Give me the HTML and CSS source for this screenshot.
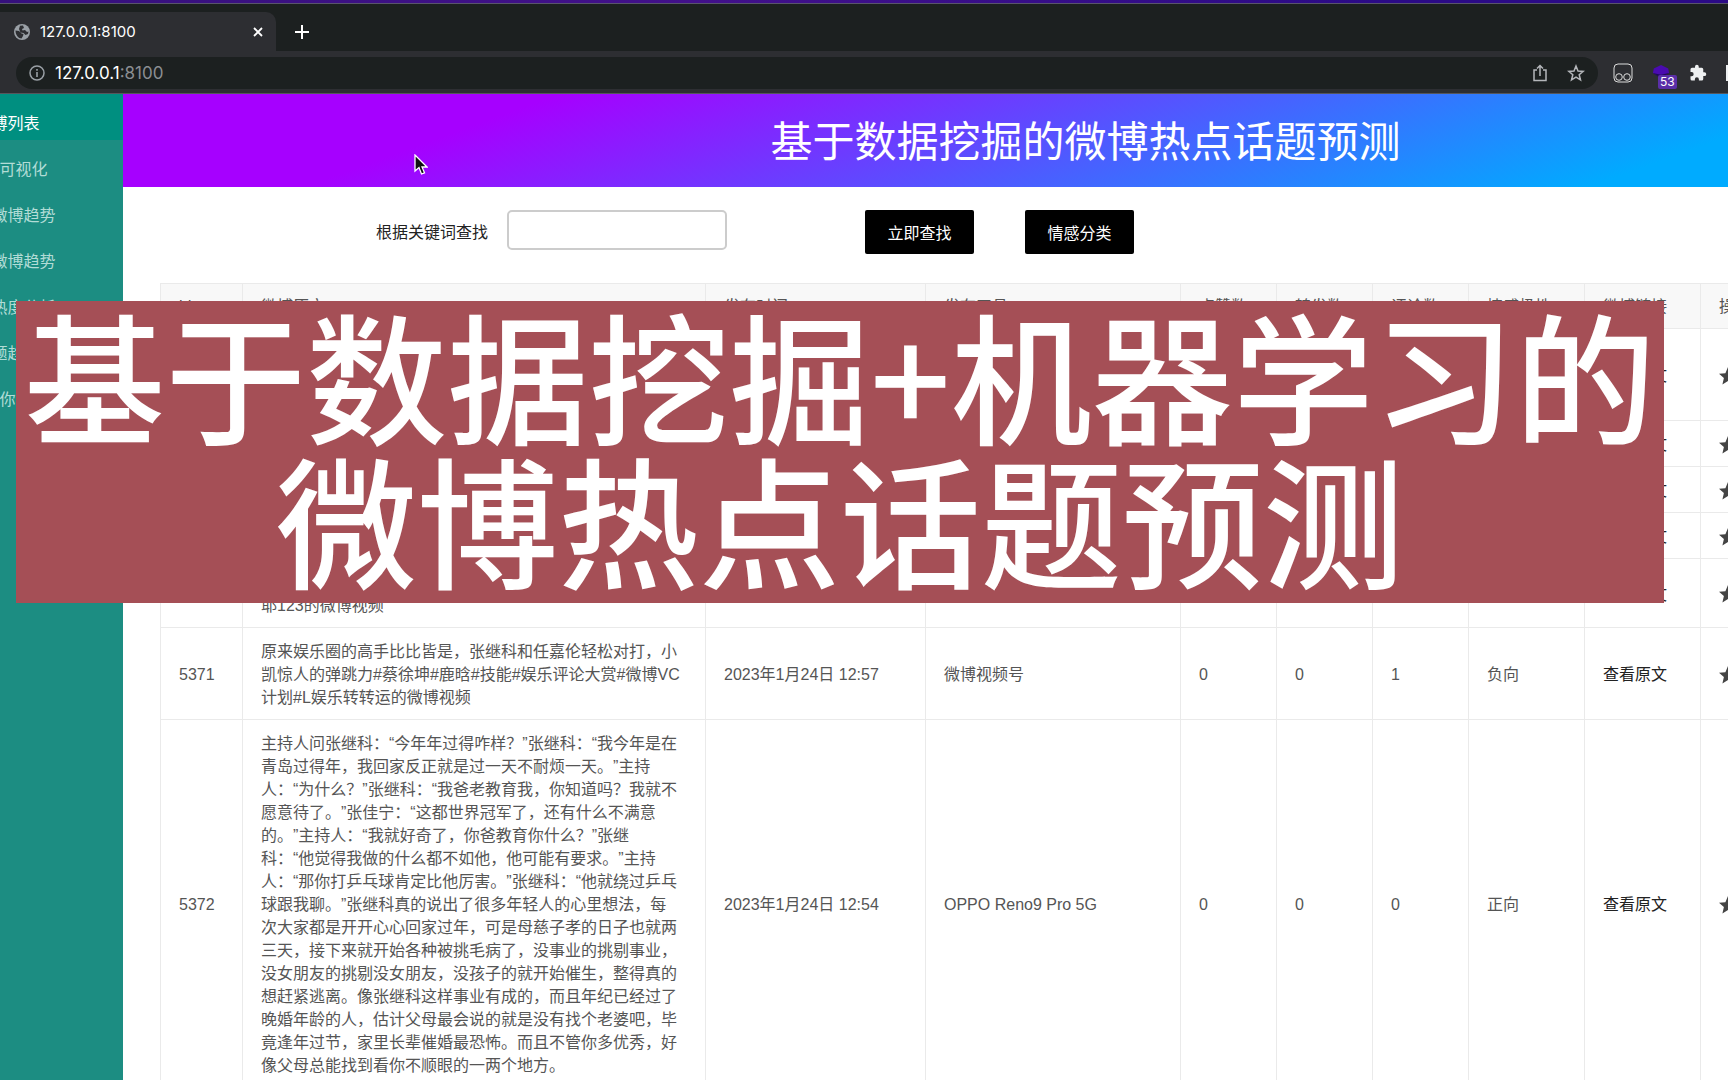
FILE: index.html
```html
<!DOCTYPE html>
<html lang="zh-CN">
<head>
<meta charset="utf-8">
<title>127.0.0.1:8100</title>
<link rel="stylesheet" href="styles.css">
</head>
<body>
<div class="desktop-edge"></div>
<header class="browser">
  <div class="tabs">
    <div class="tab">
      <svg class="globe" viewBox="0 0 16 16"><circle cx="8" cy="8" r="8" fill="#9aa0a6"/><path d="M1.500 6.500L5 7l2.500 2.500 2 .5L9 12l-1.500 2.500C4.500 14.500 1.500 11 1.500 6.500zM6 1.800l3-.3 1 2.500-2 1 .5 1.500 2.500-.5 2 2 1.500-.5-.5 2.500-2.500 1-2-2-3-.5L5 5z" fill="#2d2e32"/></svg>
      <span>127.0.0.1:8100</span>
      <button class="icon-button" aria-label="关闭标签页"><svg width="10" height="10" viewBox="0 0 10 10"><path d="M1 1l8 8M9 1L1 9" stroke="#fff" stroke-width="1.800"/></svg></button>
    </div>
    <button class="icon-button" aria-label="新标签页"><svg width="14" height="14" viewBox="0 0 14 14"><path d="M7 0v14M0 7h14" stroke="#fff" stroke-width="2"/></svg></button>
  </div>
  <div class="toolbar">
    <div class="address">
      <svg width="16" height="16" viewBox="0 0 16 16"><circle cx="8" cy="8" r="7" fill="none" stroke="#9aa0a6" stroke-width="1.500"/><path d="M8 7v5M8 4v1.700" stroke="#9aa0a6" stroke-width="1.600"/></svg>
      <a class="url" href="#">127.0.0.1<span>:8100</span></a>
      <svg width="14" height="18" viewBox="0 0 14 18" fill="none" stroke="#b4b6ba" stroke-width="1.500"><path d="M4 6H1v10.500h12V6h-3M7 12V2M4 4.500l3-3 3 3"/></svg>
      <svg class="bookmark" width="18" height="18" viewBox="0 0 18 18"><path d="M9 2l2 5 5.200.4-4 3.400 1.300 5.200L9 13.200 4.500 16l1.300-5.200-4-3.400L7 7z" fill="none" stroke="#b4b6ba" stroke-width="1.500"/></svg>
    </div>
    <div class="extensions">
      <svg width="20" height="20" viewBox="0 0 20 20" fill="none" stroke="#dcdcdc"><rect x="1" y="1" width="18" height="18" rx="4"/><circle cx="6" cy="14" r="3.300"/><circle cx="14" cy="14" r="3.300"/></svg>
      <div class="extension"><svg width="18" height="18" viewBox="0 0 20 18"><path d="M10 0l8 4 1 5-9 5-9-5 1-5z" fill="#4a0bb0"/><path d="M1 9l9 2 9-2-9 6z" fill="#210c58"/></svg><span class="badge">53</span></div>
      <svg width="18" height="18" viewBox="0 0 24 24"><path d="M20.500 11H19V7a2 2 0 0 0-2-2h-4V3.500a2.500 2.500 0 0 0-5 0V5H4a2 2 0 0 0-2 2v3.800h1.500a2.700 2.700 0 0 1 0 5.400H2V20a2 2 0 0 0 2 2h3.800v-1.500a2.700 2.700 0 0 1 5.400 0V22H17a2 2 0 0 0 2-2v-4h1.500a2.500 2.500 0 0 0 0-5z" fill="#eef0f2"/></svg>
      <div class="side-panel"></div>
    </div>
  </div>
</header>
<div class="page">
  <nav class="sidebar">
    <a class="active" href="#">微博列表</a>
    <a href="#">数据可视化</a>
    <a href="#">热门微博趋势</a>
    <a href="#">最新微博趋势</a>
    <a href="#">微博热度分析</a>
    <a href="#">热话题趋势图</a>
    <a href="#">预测你始终</a>
  </nav>
  <main>
    <h1>基于数据挖掘的微博热点话题预测</h1>
    <form class="search">
      <label for="keyword">根据关键词查找</label>
      <input id="keyword" type="text">
      <button type="button" class="find">立即查找</button>
      <button type="button">情感分类</button>
    </form>
    <table>
      <colgroup><col class="c-id"><col class="c-text"><col class="c-time"><col class="c-tool"><col class="c-num"><col class="c-num"><col class="c-num"><col class="c-link"><col class="c-link"><col></colgroup>
      <thead><tr><th>id</th><th>微博原文</th><th>发布时间</th><th>发布工具</th><th>点赞数</th><th>转发数</th><th>评论数</th><th>情感极性</th><th>微博链接</th><th>操作</th></tr></thead>
      <tbody>
        <tr class="three-lines"><td></td><td></td><td></td><td></td><td></td><td></td><td></td><td></td><td><a href="#">查看原文</a></td><td><svg class="star" viewBox="0 0 18 18"><use href="#star"/></svg></td></tr>
        <tr><td></td><td></td><td></td><td></td><td></td><td></td><td></td><td></td><td><a href="#">查看原文</a></td><td><svg class="star" viewBox="0 0 18 18"><use href="#star"/></svg></td></tr>
        <tr><td></td><td></td><td></td><td></td><td></td><td></td><td></td><td></td><td><a href="#">查看原文</a></td><td><svg class="star" viewBox="0 0 18 18"><use href="#star"/></svg></td></tr>
        <tr><td></td><td></td><td></td><td></td><td></td><td></td><td></td><td></td><td><a href="#">查看原文</a></td><td><svg class="star" viewBox="0 0 18 18"><use href="#star"/></svg></td></tr>
        <tr><td></td><td><br>耶123的微博视频</td><td></td><td></td><td></td><td></td><td></td><td></td><td><a href="#">查看原文</a></td><td><svg class="star" viewBox="0 0 18 18"><use href="#star"/></svg></td></tr>
        <tr><td>5371</td><td>原来娱乐圈的高手比比皆是，张继科和任嘉伦轻松对打，小<br>凯惊人的弹跳力#蔡徐坤#鹿晗#技能#娱乐评论大赏#微博VC<br>计划#L娱乐转转运的微博视频</td><td>2023年1月24日 12:57</td><td>微博视频号</td><td>0</td><td>0</td><td>1</td><td>负向</td><td><a href="#">查看原文</a></td><td><svg class="star" viewBox="0 0 18 18"><use href="#star"/></svg></td></tr>
        <tr><td>5372</td><td>主持人问张继科：“今年年过得咋样？”张继科：“我今年是在<br>青岛过得年，我回家反正就是过一天不耐烦一天。”主持<br>人：“为什么？”张继科：“我爸老教育我，你知道吗？我就不<br>愿意待了。”张佳宁：“这都世界冠军了，还有什么不满意<br>的。”主持人：“我就好奇了，你爸教育你什么？”张继<br>科：“他觉得我做的什么都不如他，他可能有要求。”主持<br>人：“那你打乒乓球肯定比他厉害。”张继科：“他就绕过乒乓<br>球跟我聊。”张继科真的说出了很多年轻人的心里想法，每<br>次大家都是开开心心回家过年，可是母慈子孝的日子也就两<br>三天，接下来就开始各种被挑毛病了，没事业的挑剔事业，<br>没女朋友的挑剔没女朋友，没孩子的就开始催生，整得真的<br>想赶紧逃离。像张继科这样事业有成的，而且年纪已经过了<br>晚婚年龄的人，估计父母最会说的就是没有找个老婆吧，毕<br>竟逢年过节，家里长辈催婚最恐怖。而且不管你多优秀，好<br>像父母总能找到看你不顺眼的一两个地方。</td><td>2023年1月24日 12:54</td><td>OPPO Reno9 Pro 5G</td><td>0</td><td>0</td><td>0</td><td>正向</td><td><a href="#">查看原文</a></td><td><svg class="star" viewBox="0 0 18 18"><path id="star" d="M9 0l2.600 6.200 6.400.5-4.900 4.200 1.500 6.600L9 14l-5.600 3.500 1.500-6.600L0 6.700l6.400-.5z" fill="#444"/></svg></td></tr>
      </tbody>
    </table>
  </main>
</div>
<div class="caption">基于数据挖掘+机器学习的<br>微博热点话题预测</div>
<svg class="cursor" viewBox="0 0 14 21"><path d="M1 1v16l4-3.500L7.500 20l3-1.200L8 13h5z" fill="#111" stroke="#fff" stroke-width="1.300"/></svg>
</body>
</html>
```
FILE: styles.css
```css
* { box-sizing: border-box; }
body {
  margin: 0;
  height: 100vh;
  overflow: hidden;
  position: relative;
  display: flex;
  flex-direction: column;
  background: #fff;
  color: #222;
  font: 16px/23px "Liberation Sans", "Noto Sans CJK SC", sans-serif;
  text-spacing-trim: space-all;
}
button { font: inherit; border: 0; padding: 0; }
.desktop-edge {
  height: 4px;
  flex: none;
  border-bottom: 1px solid #59546c;
  background: linear-gradient(90deg, #36107c, #42108a 40%, #2b0a86 80%);
}
.browser {
  flex: none;
  background: #2d2e32;
  color: #fff;
  font-family: Inter, sans-serif;
  border-bottom: 1px solid #55565c;
}
.tabs {
  height: 47px;
  display: flex;
  align-items: flex-end;
  gap: 19px;
  background: #1c2020;
}
.tab {
  width: 276px;
  height: 39px;
  padding: 0 13px 0 14px;
  display: flex;
  align-items: center;
  gap: 10px;
  background: #2d2e32;
  border-radius: 0 10px 0 0;
  font-size: 15px;
}
.tab span { flex: 1; }
.globe { width: 16px; height: 16px; }
.icon-button {
  display: flex;
  background: none;
}
.tabs > .icon-button { padding-bottom: 12px; }
.toolbar {
  height: 42px;
  display: flex;
  align-items: center;
  padding: 2px 0 0 16px;
  gap: 15px;
}
.address {
  flex: 1;
  height: 32px;
  padding: 0 13px;
  display: flex;
  align-items: center;
  gap: 10px;
  border-radius: 16px;
  background: #1c2020;
}
.url {
  flex: 1;
  color: #fff;
  font-size: 17px;
  text-decoration: none;
}
.url span { color: #8b8e92; }
.bookmark { margin-left: 10px; }
.extensions {
  display: flex;
  align-items: center;
  gap: 19px;
}
.extension {
  position: relative;
  display: flex;
}
.badge {
  position: absolute;
  left: 6px;
  top: 11px;
  padding: 0 2px;
  border-radius: 2px;
  background: #5a2fa8;
  font-size: 12px;
  line-height: 14px;
}
.side-panel {
  width: 2px;
  height: 16px;
  background: #eef0f2;
}
/* The web page is wider than the window and is scrolled sideways */
.page {
  flex: 1;
  width: calc(100% + 428px);
  margin-left: -108px;
  display: flex;
}
.sidebar {
  width: 231px;
  background: #1c8d82;
  text-align: center;
}
.sidebar a {
  display: block;
  padding: 18px 0 5px;
  color: #b2dcd6;
  text-decoration: none;
}
.sidebar .active {
  background: #008f80;
  color: #fff;
}
main { flex: 1; }
h1 {
  margin: 0;
  height: 93px;
  padding-top: 2px;
  color: #fff;
  font-size: 42px;
  font-weight: 400;
  line-height: 93px;
  text-align: center;
  background: linear-gradient(160deg, #a600ff 20%, #00abff 79%);
}
.search {
  display: flex;
  align-items: flex-start;
  padding: 23px 0 29px 253px;
}
.search label {
  padding-top: 11px;
  margin-right: 19px;
}
.search input {
  width: 220px;
  height: 40px;
  margin-right: 138px;
  border: 2px solid #ccc;
  border-radius: 5px;
  font: inherit;
}
.search button {
  width: 109px;
  height: 44px;
  padding-top: 2px;
  border-radius: 2px;
  background: #000;
  color: #fff;
}
.search .find { margin-right: 51px; }
table {
  width: calc(100% - 76px);
  margin-left: 37px;
  table-layout: fixed;
  border-collapse: collapse;
  color: #555;
}
.c-id { width: 82px; }
.c-text { width: 463px; }
.c-time { width: 220px; }
.c-tool { width: 255px; }
.c-num { width: 96px; }
.c-link { width: 116px; }
th, td {
  padding: 12px 0 10px 18px;
  border: 1px solid #eaeaea;
  font-weight: 400;
  text-align: left;
  white-space: nowrap;
}
th {
  padding: 11px 0 10px 18px;
  background: #f8f8f8;
}
.three-lines { height: 92px; }
td a {
  color: #222;
  text-decoration: none;
}
.star {
  display: block;
  width: 18px;
  height: 18px;
}
.caption {
  position: absolute;
  left: 16px;
  right: 64px;
  top: 301px;
  padding-bottom: 14px;
  background: #a54f56;
  color: #fff;
  font: 500 141px/144px "Noto Sans CJK SC", sans-serif;
  text-align: center;
  white-space: nowrap;
}
.cursor {
  position: absolute;
  left: 414px;
  top: 154px;
  width: 14px;
  height: 21px;
}
```
